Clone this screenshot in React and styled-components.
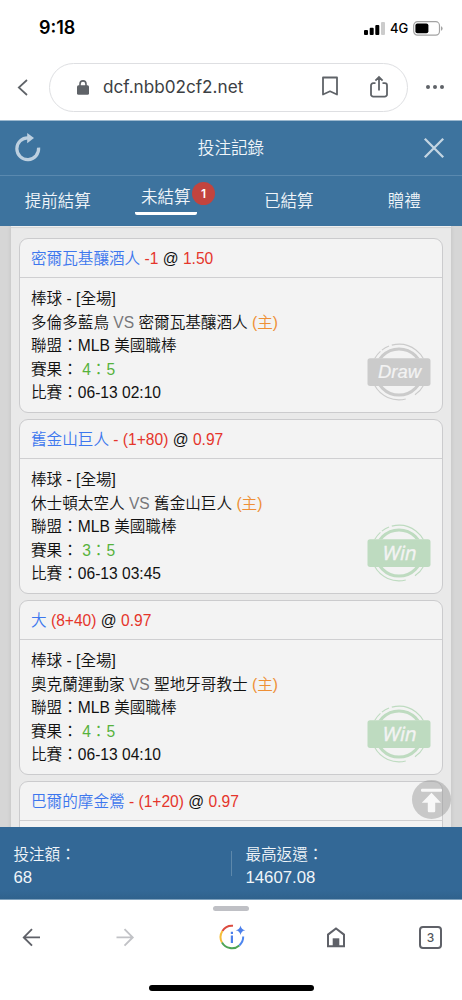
import React from 'react';
import styled, { createGlobalStyle, css } from 'styled-components';

const GlobalStyle = createGlobalStyle`
  *, *::before, *::after { box-sizing: border-box; }
  body { margin: 0; background: #fff; }
  svg { display: block; flex: none; }
`;

const Phone = styled.div`
  width: 462px;
  height: 1000px;
  display: flex;
  flex-direction: column;
  overflow: hidden;
  background: #fff;
  font-family: 'Liberation Sans', 'Noto Sans CJK TC', sans-serif;
  font-weight: 350;
`;

/* ---- status bar ---- */
const StatusBar = styled.header`
  height: 54px;
  display: flex;
  justify-content: space-between;
  align-items: center;
  padding: 2px 19px 0 39px;
  font-family: Inter, sans-serif;
  color: #000;
`;
const Clock = styled.span`
  font-size: 18px;
  font-weight: 600;
  line-height: 20px;
`;
const StatusIcons = styled.div`
  display: flex;
  align-items: center;
  gap: 5px;
`;
const Network = styled.span`
  font-size: 13px;
  font-weight: 450;
  line-height: 16px;
  width: 18px;
  white-space: nowrap;
`;

/* ---- browser address bar ---- */
const AddressRow = styled.div`
  height: 66px;
  display: flex;
  align-items: center;
  padding: 0 17px;
`;
const AddressBox = styled.div`
  flex: none;
  width: 359px;
  height: 49px;
  margin: 0 18px 0 21px;
  display: flex;
  align-items: center;
  padding: 0 18px 0 27px;
  border: 1px solid #dedfe2;
  border-radius: 25px;
`;
const Url = styled.span`
  flex: 1;
  margin-left: 14px;
  font-family: Inter, sans-serif;
  font-size: 17.15px;
  line-height: 24px;
  font-weight: 400;
  color: #3c4043;
  white-space: nowrap;
`;
const BoxIcons = styled.div`
  display: flex;
  gap: 30px;
`;

/* ---- page header and tabs ---- */
const Header = styled.div`
  height: 56px;
  display: flex;
  align-items: center;
  justify-content: space-between;
  padding: 0 17px 0 14px;
  background: #3d739e;
  border-top: 1px solid #9db9cf;
  border-bottom: 1px solid #5a89af;
`;
const Title = styled.h1`
  margin: 0;
  padding: 2px 3px 0 0;
  font-size: 16.6px;
  font-weight: 350;
  line-height: 24px;
  color: #f0f5f9;
`;
const Tabs = styled.nav`
  height: 50px;
  display: grid;
  grid-template-columns: repeat(4, 1fr);
  background: #3d739e;
`;
const Tab = styled.div`
  display: flex;
  justify-content: center;
  align-items: flex-start;
  padding: 13px ${(p) => (p.$active ? '15px' : '0')} 0 0;
  font-size: 16.5px;
  line-height: 24px;
  color: #f0f5f9;
  ${(p) => p.$active && css`padding-top: 9px;`}
`;
const TabLabel = styled.span`
  position: relative;
  padding: 0 6px 3px;
  ${(p) => p.$active && css`border-bottom: 3px solid #fff; border-radius: 2px;`}
`;
const Badge = styled.span`
  position: absolute;
  top: -3px;
  right: -18.5px;
  width: 23px;
  height: 23px;
  border-radius: 50%;
  background: #c2443e;
  color: #fff;
  font: 600 12px/23px Inter, sans-serif;
  text-align: center;
`;

/* ---- bet list ---- */
const ListArea = styled.main`
  position: relative;
  height: 601px;
  padding: 0 11px;
  background: #d6d6d6;
  overflow: hidden;
`;
const ListPanel = styled.div`
  height: 620px;
  display: flex;
  flex-direction: column;
  gap: 6px;
  padding: 11px 8px 0;
  background: #e9e9e9;
  border-top: 1px solid #efefef;
  box-shadow: 0 0 4px rgba(0, 0, 0, 0.1), inset 0 2px 1px -1px #d4d4d4;
`;
const Card = styled.article`
  flex: none;
  height: 175px;
  border: 1px solid #cbcbcd;
  border-radius: 9px;
  background: #f3f3f3;
  font-size: 15.6px;
  color: #111;
`;
const CardHead = styled.div`
  height: 39px;
  padding: 0 11px;
  line-height: 40px;
  border-bottom: 1px solid #cfcfd1;
  white-space: nowrap;
`;
const CardBody = styled.div`
  display: flex;
  justify-content: space-between;
  padding: 9.4px 11px 0;
`;
const Lines = styled.div`
  line-height: 23.4px;
  white-space: nowrap;
`;
const StampSlot = styled.div`
  padding-top: 56px;
`;
const tones = { pick: '#3d77ee', odds: '#e5352b', versus: '#77777a', home: '#ee8f35', score: '#56b23c' };
const Tone = styled.span`
  color: ${(p) => tones[p.$tone]};
`;
const StampText = styled.text`
  font-family: ${(p) => (p.$win ? "'Noto Sans'" : "'Liberation Sans'")}, sans-serif;
  font-size: ${(p) => (p.$win ? '19.6px' : '18px')};
  font-style: ${(p) => (p.$win ? 'normal' : 'italic')};
  font-weight: 400;
  fill: #f3f3f3;
  stroke: #f3f3f3;
  stroke-width: ${(p) => (p.$win ? '0.4px' : '0.2px')};
`;
const TopButton = styled.button`
  position: absolute;
  right: 11px;
  top: 554px;
  width: 39px;
  height: 39px;
  padding: 0;
  border: 0;
  border-radius: 50%;
  background: rgba(150, 150, 150, 0.47);
`;

/* ---- totals ---- */
const Totals = styled.div`
  height: 73px;
  display: flex;
  align-items: flex-start;
  padding-top: 16px;
  background: linear-gradient(#336896 88%, #2f628d);
  border-bottom: 1px solid #7fa1bd;
  color: #f0f5f9;
  font-size: 15.6px;
  line-height: 23px;
`;
const Total = styled.div`
  width: ${(p) => p.$width}px;
  padding-left: 13.4px;
`;
const Amount = styled.div`
  font-size: 16.8px;
`;
const Divider = styled.div`
  width: 1px;
  height: 25px;
  margin-top: 8px;
  background: #5d88ab;
`;

/* ---- browser toolbar ---- */
const BottomBar = styled.footer`
  height: 100px;
  display: flex;
  flex-direction: column;
  align-items: center;
  background: #fff;
`;
const Grip = styled.div`
  width: 36px;
  height: 5px;
  margin-top: 6px;
  border-radius: 3px;
  background: #bfc0c5;
`;
const Toolbar = styled.div`
  width: 462px;
  display: flex;
  justify-content: space-between;
  align-items: center;
  height: 30px;
  margin-top: 11px;
  padding: 0 20px 0 19px;
`;
const ToolGroup = styled.div`
  display: flex;
  align-items: center;
  gap: ${(p) => p.$gap}px;
`;
const TabCount = styled.div`
  width: 23px;
  height: 23px;
  border: 2px solid #5f6168;
  border-radius: 4px;
  color: #55575d;
  font: 500 12px/19px Inter, sans-serif;
  text-align: center;
`;
const HomeIndicator = styled.div`
  width: 165px;
  height: 6px;
  margin-top: 33px;
  border-radius: 3px;
  background: #000;
`;

const point = (r, deg) => {
  const a = (deg * Math.PI) / 180;
  return `${(32 + r * Math.cos(a)).toFixed(2)} ${(29 + r * Math.sin(a)).toFixed(2)}`;
};
const arc = (r, from, to) => `M${point(r, from)}A${r} ${r} 0 ${to - from > 180 ? 1 : 0} 1 ${point(r, to)}`;

function Stamp({ result }) {
  const win = result === 'Win';
  const color = win ? '#bedbc0' : '#cbcbcb';
  return (
    <svg width="64" height="58" viewBox="0 0 64 58" fill="none">
      <circle cx="32" cy="29" r="23.1" stroke={color} strokeWidth="3" />
      <path
        d={arc(27.8, 76, 228) + arc(27.8, 232, 249) + arc(27.8, 255, 360) + arc(27.8, 0, 55)}
        stroke={color}
        strokeWidth="1.1"
      />
      <rect x="5" y="15.5" width="54" height="27" fill="#f3f3f3" />
      <rect x="0.5" y="15.3" width="63" height="27.6" rx="2.6" fill={color} />
      <StampText
        $win={win}
        x={win ? 14.5 : 11}
        y={win ? 36.2 : 35.3}
        textLength={win ? 34 : 43}
        lengthAdjust="spacingAndGlyphs"
        transform={win ? 'translate(7.6 0) skewX(-12)' : undefined}
      >
        {result}
      </StampText>
    </svg>
  );
}

const bets = [
  { pick: '密爾瓦基釀酒人', line: '-1', odds: '1.50', away: '多倫多藍鳥', home: '密爾瓦基釀酒人', score: '4：5', time: '06-13 02:10', result: 'Draw' },
  { pick: '舊金山巨人', line: '- (1+80)', odds: '0.97', away: '休士頓太空人', home: '舊金山巨人', score: '3：5', time: '06-13 03:45', result: 'Win' },
  { pick: '大', line: '(8+40)', odds: '0.97', away: '奧克蘭運動家', home: '聖地牙哥教士', score: '4：5', time: '06-13 04:10', result: 'Win' },
  { pick: '巴爾的摩金鶯', line: '- (1+20)', odds: '0.97' },
];

function BetCard({ bet }) {
  return (
    <Card>
      <CardHead>
        <Tone $tone="pick">{bet.pick}</Tone> <Tone $tone="odds">{bet.line}</Tone> @ <Tone $tone="odds">{bet.odds}</Tone>
      </CardHead>
      {bet.result && (
        <CardBody>
          <Lines>
            <div>棒球 - [全場]</div>
            <div>
              {bet.away} <Tone $tone="versus">VS</Tone> {bet.home} <Tone $tone="home">(主)</Tone>
            </div>
            <div>聯盟：MLB 美國職棒</div>
            <div>
              賽果： <Tone $tone="score">{bet.score}</Tone>
            </div>
            <div>比賽：{bet.time}</div>
          </Lines>
          <StampSlot>
            <Stamp result={bet.result} />
          </StampSlot>
        </CardBody>
      )}
    </Card>
  );
}

export default function App() {
  return (
    <Phone>
      <GlobalStyle />
      <StatusBar>
        <Clock>9:18</Clock>
        <StatusIcons>
          <svg width="21" height="13" viewBox="0 0 21 13">
            <rect x="0" y="8" width="4" height="5" rx="1" />
            <rect x="5.7" y="5.7" width="4" height="7.3" rx="1" />
            <rect x="11.3" y="3" width="4" height="10" rx="1" />
            <rect x="17" y="0" width="4" height="13" rx="1" fill="#ccc" />
          </svg>
          <Network>4G</Network>
          <svg width="30" height="15" viewBox="0 0 30 15">
            <rect x="0.7" y="0.7" width="25.8" height="13.4" rx="3.8" fill="none" stroke="#a3a3a3" strokeWidth="1.2" />
            <rect x="2.4" y="2.6" width="13" height="9.6" rx="2" />
            <path d="M28 5.2q1.6.6 1.6 2.3T28 9.8z" fill="#a3a3a3" />
          </svg>
        </StatusIcons>
      </StatusBar>

      <AddressRow>
        <svg width="11" height="17" viewBox="0 0 11 17" fill="none" stroke="#5f6368" strokeWidth="1.7">
          <path d="M10 1 1.8 8.5 10 16" />
        </svg>
        <AddressBox>
          <svg width="12" height="15" viewBox="0 0 12 15">
            <rect x="0" y="5.2" width="12" height="9.6" rx="1.5" fill="#5f6368" />
            <path d="M3 6V3.9a3 3 0 0 1 6 0V6" fill="none" stroke="#5f6368" strokeWidth="1.6" />
          </svg>
          <Url>dcf.nbb02cf2.net</Url>
          <BoxIcons>
            <svg width="18" height="22" viewBox="0 0 18 22" fill="none" stroke="#5f6368" strokeWidth="1.8">
              <path d="M2 2.5h14v17l-7-3.2-7 3.2z" strokeLinejoin="round" />
            </svg>
            <svg width="20" height="24" viewBox="0 0 20 24" fill="none" stroke="#5f6368" strokeWidth="1.8">
              <path d="M6.5 8.2H4.2A2.2 2.2 0 0 0 2 10.4v9a2.2 2.2 0 0 0 2.2 2.2h11.6a2.2 2.2 0 0 0 2.2-2.2v-9a2.2 2.2 0 0 0-2.2-2.2h-2.3M10 15.5V2.2M6.4 5.6 10 2l3.6 3.6" />
            </svg>
          </BoxIcons>
        </AddressBox>
        <svg width="18" height="4" viewBox="0 0 18 4" fill="#5f6368">
          <circle cx="2" cy="2" r="2" />
          <circle cx="9" cy="2" r="2" />
          <circle cx="16" cy="2" r="2" />
        </svg>
      </AddressRow>

      <Header>
        <svg width="28" height="30" viewBox="0 0 28 30" fill="none">
          <path d="M24.6 14.7A10.9 10.9 0 1 1 14.2 4.8" stroke="#bdd0e0" strokeWidth="3.2" />
          <path d="M13.2 0v10.2L20 5z" fill="#bdd0e0" />
        </svg>
        <Title>投注記錄</Title>
        <svg width="22" height="22" viewBox="0 0 22 22" stroke="#c4d5e2" strokeWidth="2.3">
          <path d="m1.8 1.8 18.4 18.4m0-18.4L1.8 20.2" />
        </svg>
      </Header>
      <Tabs>
        <Tab><TabLabel>提前結算</TabLabel></Tab>
        <Tab $active>
          <TabLabel $active>
            未結算
            <Badge>1</Badge>
          </TabLabel>
        </Tab>
        <Tab><TabLabel>已結算</TabLabel></Tab>
        <Tab><TabLabel>贈禮</TabLabel></Tab>
      </Tabs>

      <ListArea>
        <ListPanel>
          {bets.map((bet) => (
            <BetCard key={bet.pick} bet={bet} />
          ))}
        </ListPanel>
        <TopButton aria-label="回到頂部">
          <svg width="39" height="39" viewBox="0 0 39 39" fill="#f8f8f8">
            <rect x="9" y="8.8" width="21" height="3" rx="1.3" />
            <path d="M19.5 12.8 29 22.7H23.2v8.4q0 1.2-1.2 1.2h-5q-1.2 0-1.2-1.2v-8.4H9.8z" />
          </svg>
        </TopButton>
      </ListArea>

      <Totals>
        <Total $width={231}>
          投注額：
          <Amount>68</Amount>
        </Total>
        <Divider />
        <Total $width={230}>
          最高返還：
          <Amount>14607.08</Amount>
        </Total>
      </Totals>

      <BottomBar>
        <Grip />
        <Toolbar>
          <ToolGroup $gap={70}>
            <svg width="24" height="24" viewBox="0 0 24 24" fill="none" stroke="#5f6168" strokeWidth="1.9">
              <path d="M21 12.4H4.5M13 4.2 4.8 12.4l8.2 8.2" />
            </svg>
            <svg width="24" height="24" viewBox="0 0 24 24" fill="none" stroke="#c1c2c6" strokeWidth="1.9">
              <path d="M3.5 12.4H20M11.5 4.2l8.2 8.2-8.2 8.2" />
            </svg>
          </ToolGroup>
          <svg width="28" height="28" viewBox="0 0 28 28" fill="none" strokeWidth="2">
            <path d="M15 2.8A11.3 11.3 0 0 0 4.4 8" stroke="#dc4b3f" />
            <path d="M4.4 8a11.3 11.3 0 0 0-.4 11.6" stroke="#f5bd3a" />
            <path d="M4 19.6a11.3 11.3 0 0 0 17.3 2.8" stroke="#4da456" />
            <path d="M21.3 22.4A11.3 11.3 0 0 0 25.2 13.6" stroke="#4d86ef" />
            <path d="M22.5 2.4q.7 4.1 4.8 4.8-4.1.7-4.8 4.8-.7-4.1-4.8-4.8 4.1-.7 4.8-4.8zM12.8 8.8h2.2v2.1h-2.2zM12.8 12.5h2.2v7.6h-2.2z" fill="#4d80eb" />
          </svg>
          <ToolGroup $gap={73}>
            <svg width="20" height="22" viewBox="0 0 20 22">
              <path d="M2 20.3V8.6l8-6.2 8 6.2v11.7z" fill="none" stroke="#5f6168" strokeWidth="2" />
              <path d="M6.7 12.3h6.6v8H6.7z" fill="#5f6168" />
            </svg>
            <TabCount>3</TabCount>
          </ToolGroup>
        </Toolbar>
        <HomeIndicator />
      </BottomBar>
    </Phone>
  );
}
